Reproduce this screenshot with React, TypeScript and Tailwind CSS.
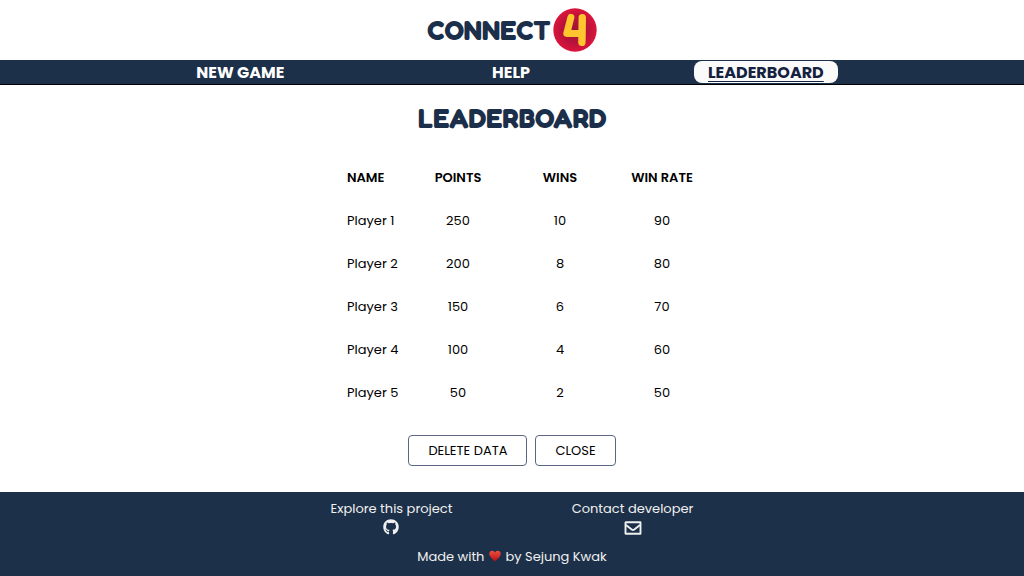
import React from "react";
import { FaGithub } from "react-icons/fa";

const players = [
  { name: "Player 1", points: 250, wins: 10, rate: 90 },
  { name: "Player 2", points: 200, wins: 8, rate: 80 },
  { name: "Player 3", points: 150, wins: 6, rate: 70 },
  { name: "Player 4", points: 100, wins: 4, rate: 60 },
  { name: "Player 5", points: 50, wins: 2, rate: 50 },
];

function Logo() {
  return (
    <a href="#home" className="flex items-center gap-0.5 text-[#1c2f4a]">
      <span className="font-['Fredoka_One','Fredoka','Poppins','Inter',sans-serif] text-[27px] leading-7 font-bold">
        CONNECT
      </span>
      <svg viewBox="0 0 44 44" className="size-11" role="img" aria-label="4">
        <defs>
          <radialGradient id="disc">
            <stop offset="0" stopColor="#9c1238" />
            <stop offset="0.6" stopColor="#b9123a" />
            <stop offset="1" stopColor="#dc143c" />
          </radialGradient>
        </defs>
        <circle cx="22" cy="22" r="21.7" fill="url(#disc)" />
        <g fill="none" stroke="#ffc52f" strokeLinecap="round" strokeLinejoin="round">
          <path d="M17.900 9.300 13.800 25.400H28.800" strokeWidth="7" />
          <path d="M29.300 9.600 28.900 34.400" strokeWidth="7.400" />
        </g>
      </svg>
    </a>
  );
}

function EnvelopeIcon() {
  return (
    <svg viewBox="0 0 18 14" className="my-0.5 h-3.5 w-[18px]" fill="none" stroke="currentColor" aria-hidden="true">
      <rect x="1.500" y="1.300" width="15" height="11.400" rx="0.300" strokeWidth="1.900" />
      <path d="M2 4 7.700 8.400Q9 9.400 10.300 8.400L16 4" strokeWidth="1.900" />
    </svg>
  );
}

export default function App() {
  return (
    <div className="flex min-h-screen flex-col bg-white font-['Poppins','Inter',sans-serif] text-[13px] leading-5 text-black">
      <header className="flex h-[60px] items-center justify-center">
        <Logo />
      </header>

      <nav className="grid grid-cols-[272fr_270fr_240fr] items-center justify-items-center border-b border-black bg-[#1d3049] py-px pr-[13.5%] pl-[10.2%] text-base leading-5 font-bold text-white">
        <a href="#new" className="pt-0.5">NEW GAME</a>
        <a href="#help" className="pt-0.5">HELP</a>
        <a
          href="#leaderboard"
          aria-current="page"
          className="rounded-lg bg-[#fafafa] px-3.5 pt-0.5 text-[#14213f] underline decoration-1 underline-offset-3"
        >
          LEADERBOARD
        </a>
      </nav>

      <main className="flex flex-1 flex-col items-center pb-6">
        <h1 className="mt-[19px] font-['Fredoka_One','Fredoka','Poppins','Inter',sans-serif] text-[27px] leading-7 font-bold text-[#1c2f4a]">
          LEADERBOARD
        </h1>
        <table className="mt-6 w-[402px] table-fixed text-center">
          <thead>
            <tr className="h-[43px]">
              <th className="w-24 pl-9 text-left font-semibold">NAME</th>
              <th className="font-semibold">POINTS</th>
              <th className="font-semibold">WINS</th>
              <th className="font-semibold">WIN RATE</th>
            </tr>
          </thead>
          <tbody>
            {players.map((p) => (
              <tr key={p.name} className="h-[43px]">
                <td className="pl-9 text-left whitespace-nowrap">{p.name}</td>
                <td>{p.points}</td>
                <td>{p.wins}</td>
                <td>{p.rate}</td>
              </tr>
            ))}
          </tbody>
        </table>
        <div className="mt-[21px] flex gap-2">
          <button type="button" className="rounded border border-[#5b6780] px-[19px] py-1 leading-[21px]">
            DELETE DATA
          </button>
          <button type="button" className="rounded border border-[#5b6780] px-[19px] py-1 leading-[21px]">
            CLOSE
          </button>
        </div>
      </main>

      <footer className="flex flex-col items-center bg-[#1d3049] pt-[7px] pb-[9px] text-[#f0f0f0]">
        <div className="grid w-[482px] max-w-full grid-cols-2 justify-items-center">
          <a href="#project" className="flex flex-col items-center">
            Explore this project
            <FaGithub className="size-4" />
          </a>
          <a href="#contact" className="flex flex-col items-center">
            Contact developer
            <EnvelopeIcon />
          </a>
        </div>
        <p className="mt-2.5">
          Made with{" "}
          <svg viewBox="0 0 14 13" className="inline h-3 w-3.5 align-[-1px]" role="img" aria-label="love">
            <defs>
              <linearGradient id="heart" x2="0" y2="1">
                <stop offset="0" stopColor="#f0503f" />
                <stop offset="1" stopColor="#b30f12" />
              </linearGradient>
            </defs>
            <path d="M7 12.500C5 10 .8 7.600.8 4.100.8 1.900 2.300.7 3.900.7 5.500.7 6.600 1.700 7 3 7.400 1.700 8.500.7 10.100.7c1.600 0 3.100 1.200 3.100 3.400C13.200 7.600 9 10 7 12.500Z" fill="url(#heart)" />
          </svg>{" "}
          by Sejung Kwak
        </p>
      </footer>
    </div>
  );
}
